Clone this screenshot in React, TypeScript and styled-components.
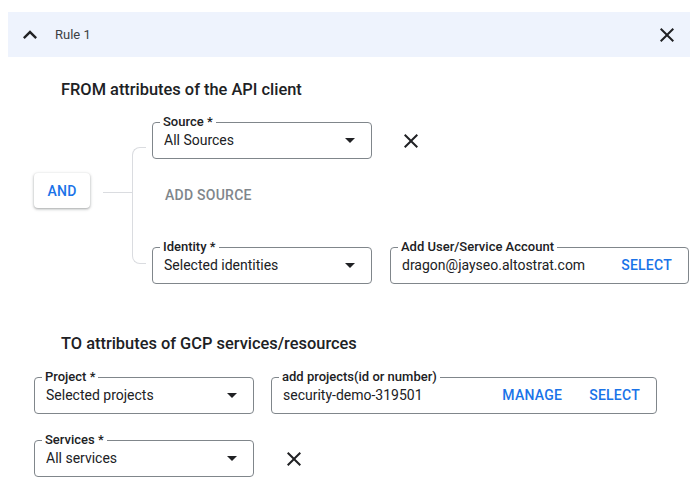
import React from 'react';
import styled, { createGlobalStyle } from 'styled-components';

const Global = createGlobalStyle`
  html, body { margin: 0; padding: 0; background: #fff; }
  body { font-family: Roboto, "Liberation Sans", Arial, sans-serif; color: #202124; }
  * { box-sizing: border-box; }
`;

const Page = styled.div`
  width: 700px;
  height: 494px;
  overflow: hidden;
  padding-top: 12px;
`;

const Header = styled.div`
  margin: 0 10px 0 8px;
  height: 45px;
  background: #eef3fd;
  display: flex;
  align-items: center;
  padding: 0 11px 0 8px;
`;

const HeaderTitle = styled.span`
  margin-left: 11px;
  font-size: 13px;
  color: #3c4043;
  flex: 1;
`;

const IconBox = styled.span<{ $size?: number }>`
  width: ${p => p.$size ?? 24}px;
  height: ${p => p.$size ?? 24}px;
  display: inline-flex;
  align-items: center;
  justify-content: center;
  color: #202124;
  flex: none;
`;

const Content = styled.div`
  padding-left: 34px;
`;

const SectionTitle = styled.h2<{ $top: number }>`
  margin: ${p => p.$top}px 0 0 27px;
  font-size: 16.4px;
  line-height: 20px;
  font-weight: 500;
  color: #202124;
`;

const FromBlock = styled.div`
  display: flex;
  align-items: flex-start;
  margin-top: 15px;
`;

const AndButton = styled.button`
  margin-top: 58px;
  width: 56px;
  height: 35px;
  border: none;
  border-radius: 4px;
  background: #fff;
  box-shadow: 0 1px 2px rgba(60, 64, 67, 0.3), 0 1px 3px 1px rgba(60, 64, 67, 0.15);
  font-family: inherit;
  font-size: 14px;
  font-weight: 500;
  color: #1a73e8;
  letter-spacing: 0.25px;
  flex: none;
`;

const Connector = styled.div`
  margin: 77px 0 0 13px;
  width: 29px;
  height: 1px;
  background: #dadce0;
  flex: none;
`;

const Bracket = styled.div`
  margin-top: 32px;
  width: 14px;
  height: 117px;
  border: 1px solid #dadce0;
  border-right: none;
  border-radius: 8px 0 0 8px;
  flex: none;
`;

const Rows = styled.div`
  margin-left: 6px;
  display: flex;
  flex-direction: column;
`;

const Row = styled.div<{ $top?: number; $gap?: number }>`
  display: flex;
  align-items: flex-end;
  gap: ${p => p.$gap ?? 0}px;
  margin-top: ${p => p.$top ?? 0}px;
`;

const TextButton = styled.button<{ $muted?: boolean }>`
  border: none;
  background: transparent;
  padding: 0 13px;
  height: 36px;
  font-family: inherit;
  font-size: 14px;
  font-weight: 500;
  letter-spacing: 0.25px;
  color: ${p => (p.$muted ? '#80868b' : '#1a73e8')};
  align-self: flex-start;
`;

const LinkButton = styled.span<{ $gap?: number }>`
  font-size: 14px;
  font-weight: 500;
  letter-spacing: 0.25px;
  color: #1a73e8;
  margin-left: ${p => p.$gap ?? 0}px;
  flex: none;
`;

const Fieldset = styled.fieldset<{ $w: number }>`
  margin: 0;
  width: ${p => p.$w}px;
  min-width: 0;
  padding: 0 16px 7px 11px;
  border: 1px solid #80868b;
  border-radius: 4px;
  flex: none;
`;

const Legend = styled.legend`
  font-size: 13px;
  line-height: 14px;
  font-weight: 500;
  color: #202124;
  padding: 0 3px;
  margin-left: -4px;
`;

const FieldBody = styled.div`
  height: 22px;
  display: flex;
  align-items: center;
  font-size: 14px;
  color: #202124;
`;

const Value = styled.span`
  flex: 1;
  white-space: nowrap;
  overflow: hidden;
`;

const XWrap = styled.span<{ $gap: number }>`
  align-self: flex-end;
  margin-left: ${p => p.$gap}px;
  margin-bottom: 6px;
  display: inline-flex;
`;

const CloseIcon = () => (
  <svg width="24" height="24" viewBox="0 0 24 24" fill="currentColor">
    <path d="M19 6.41L17.59 5 12 10.59 6.41 5 5 6.41 10.59 12 5 17.59 6.41 19 12 13.41 17.59 19 19 17.59 13.41 12z" />
  </svg>
);

const ChevronUp = () => (
  <svg width="28" height="28" viewBox="0 0 24 24" fill="currentColor">
    <path d="M12 8l-6 6 1.41 1.41L12 10.83l4.59 4.58L18 14z" />
  </svg>
);

const ArrowDrop = styled.svg`
  flex: none;
  margin-right: -7px;
`;

const DropArrow = () => (
  <ArrowDrop width="24" height="24" viewBox="0 0 24 24" fill="#202124">
    <path d="M7 10l5 5 5-5z" />
  </ArrowDrop>
);

type SelectProps = { label: string; value: string; width: number };
const SelectField = ({ label, value, width }: SelectProps) => (
  <Fieldset $w={width}>
    <Legend>{label}</Legend>
    <FieldBody>
      <Value>{value}</Value>
      <DropArrow />
    </FieldBody>
  </Fieldset>
);

type InputProps = { label: string; value: string; width: number; actions: string[] };
const ActionField = ({ label, value, width, actions }: InputProps) => (
  <Fieldset $w={width}>
    <Legend>{label}</Legend>
    <FieldBody>
      <Value>{value}</Value>
      {actions.map((a, i) => (
        <LinkButton key={a} $gap={i === 0 ? 0 : 27}>{a}</LinkButton>
      ))}
    </FieldBody>
  </Fieldset>
);

const RemoveX = ({ gap }: { gap: number }) => (
  <XWrap $gap={gap}>
    <IconBox><CloseIcon /></IconBox>
  </XWrap>
);

export default function App() {
  return (
    <Page>
      <Global />
      <Header>
        <IconBox $size={28}><ChevronUp /></IconBox>
        <HeaderTitle>Rule 1</HeaderTitle>
        <IconBox><CloseIcon /></IconBox>
      </Header>
      <Content>
        <SectionTitle $top={23}>FROM attributes of the API client</SectionTitle>
        <FromBlock>
          <AndButton>AND</AndButton>
          <Connector />
          <Bracket />
          <Rows>
            <Row>
              <SelectField label="Source *" value="All Sources" width={220} />
              <RemoveX gap={27} />
            </Row>
            <Row $top={18}>
              <TextButton $muted>ADD SOURCE</TextButton>
            </Row>
            <Row $top={27} $gap={18}>
              <SelectField label="Identity *" value="Selected identities" width={220} />
              <ActionField
                label="Add User/Service Account"
                value="dragon@jayseo.altostrat.com"
                width={299}
                actions={['SELECT']}
              />
            </Row>
          </Rows>
        </FromBlock>
        <SectionTitle $top={50}>TO attributes of GCP services/resources</SectionTitle>
        <Row $top={16} $gap={17}>
          <SelectField label="Project *" value="Selected projects" width={220} />
          <ActionField
            label="add projects(id or number)"
            value="security-demo-319501"
            width={386}
            actions={['MANAGE', 'SELECT']}
          />
        </Row>
        <Row $top={19}>
          <SelectField label="Services *" value="All services" width={220} />
          <RemoveX gap={28} />
        </Row>
      </Content>
    </Page>
  );
}
